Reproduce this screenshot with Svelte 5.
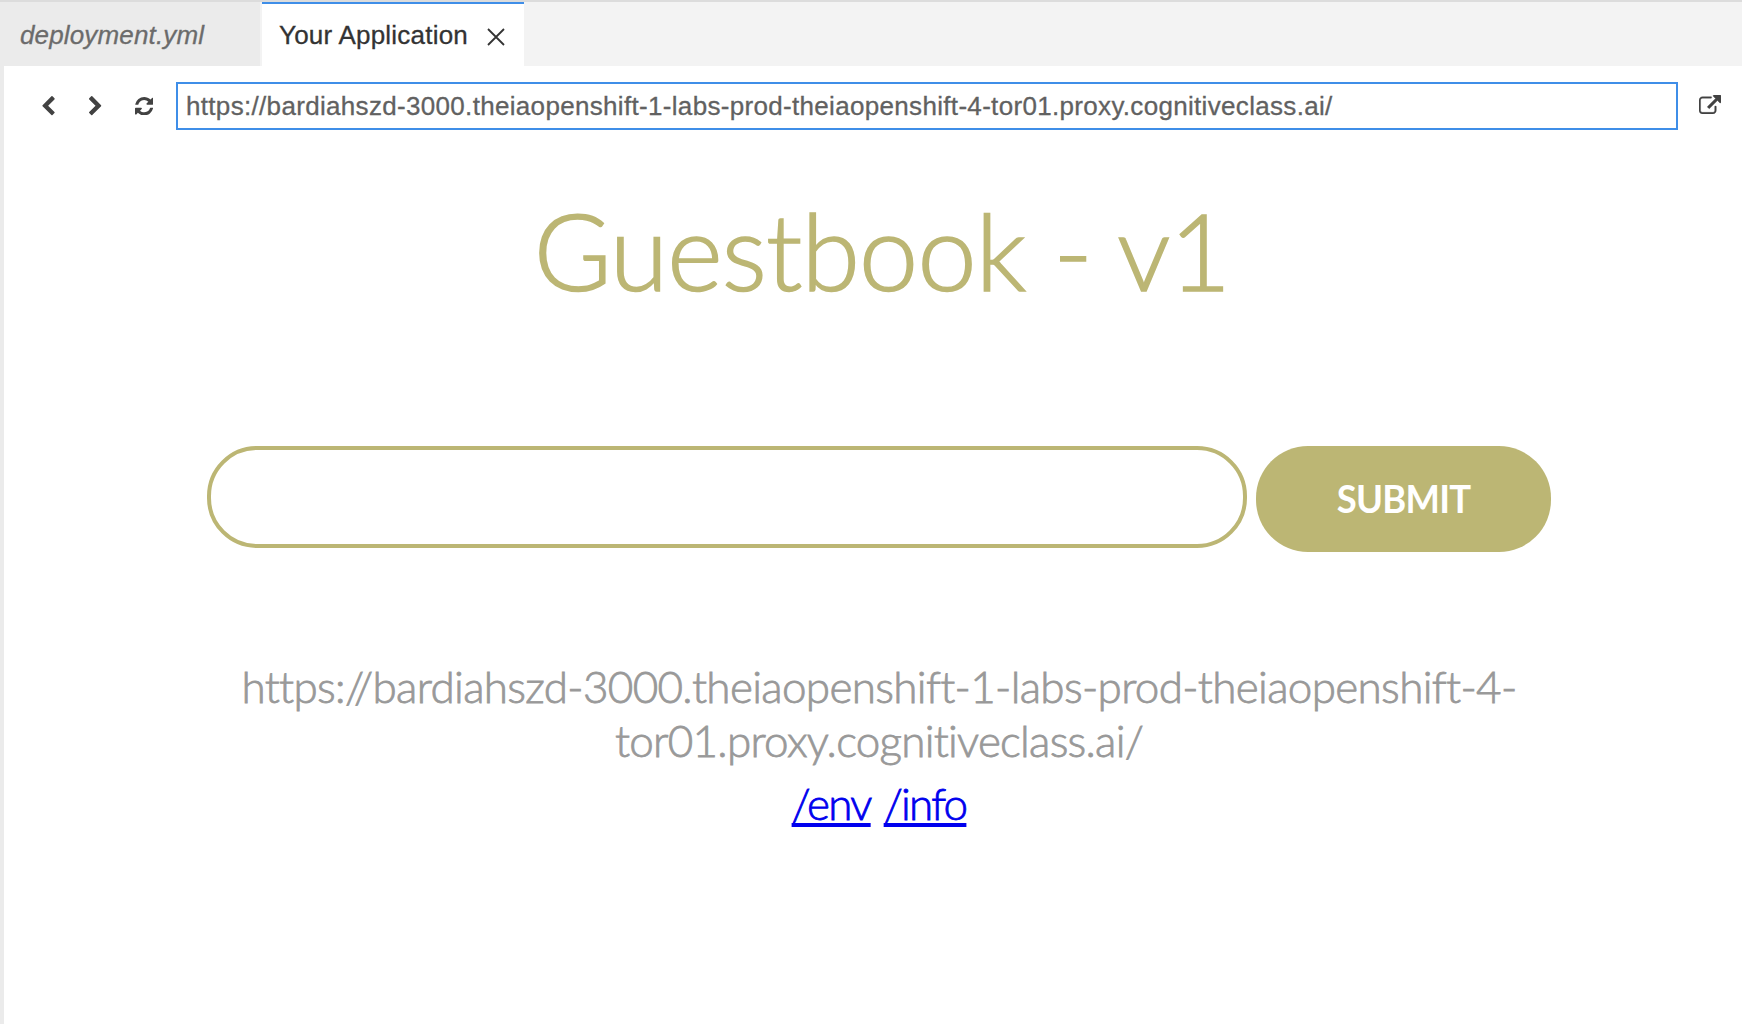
<script>
  const address = 'https://bardiahszd-3000.theiaopenshift-1-labs-prod-theiaopenshift-4-tor01.proxy.cognitiveclass.ai/';
  const split = address.indexOf('tor01');
  const hostLines = [address.slice(0, split), address.slice(split)];
  const chevron =
    'M1171 301l-531 531 531 531q19 19 19 45t-19 45l-166 166q-19 19-45 19t-45-19l-742-742q-19-19-19-45t19-45l742-742q19-19 45-19t45 19l166 166q19 19 19 45t-19 45z';
</script>

<div class="window">
  <div class="tabs">
    <div class="tab idle"><span class="file">deployment.yml</span></div>
    <div class="tab active">
      <span class="title">Your Application</span>
      <svg class="close" viewBox="0 0 18 18"><path d="M1 1L17 17M17 1L1 17" /></svg>
    </div>
  </div>

  <div class="panel">
    <div class="toolbar">
      <svg class="chevron" viewBox="124 20 1066 1624"><path d={chevron} /></svg>
      <svg class="chevron next" viewBox="124 20 1066 1624"><path d={chevron} /></svg>
      <svg class="refresh" viewBox="0 0 1536 1536"><path d="M1511 928q0 5-1 7-64 268-268 434.5t-478 166.5q-146 0-282.5-55t-243.5-157l-129 129q-19 19-45 19t-45-19-19-45v-448q0-26 19-45t45-19h448q26 0 45 19t19 45-19 45l-137 137q71 66 161 102t187 36q134 0 250-65t186-179q11-17 53-117 8-23 30-23h192q13 0 22.5 9.5t9.5 22.5zm25-800v448q0 26-19 45t-45 19h-448q-26 0-45-19t-19-45 19-45l138-138q-148-137-349-137-134 0-250 65t-186 179q-11 17-53 117-8 23-30 23h-199q-13 0-22.5-9.5t-9.5-22.5v-7q65-268 270-434.5t480-166.5q146 0 284 55.5t245 156.5l130-129q19-19 45-19t45 19 19 45z" /></svg>
      <div class="address"><span>{address}</span></div>
      <svg class="external" viewBox="0 0 1792 1536"><path d="M1408 928v320q0 119-84.5 203.5t-203.5 84.5h-832q-119 0-203.5-84.5t-84.5-203.5v-832q0-119 84.5-203.5t203.5-84.5h704q14 0 23 9t9 23v64q0 14-9 23t-23 9h-704q-66 0-113 47t-47 113v832q0 66 47 113t113 47h832q66 0 113-47t47-113v-320q0-14 9-23t23-9h64q14 0 23 9t9 23zm384-864v512q0 26-19 45t-45 19-45-19l-176-176-652 652q-10 10-23 10t-23-10l-114-114q-10-10-10-23t10-23l652-652-176-176q-19-19-19-45t19-45 45-19h512q26 0 45 19t19 45z" /></svg>
    </div>

    <main>
      <h1>Guestbook - v1</h1>
      <form onsubmit={(e) => e.preventDefault()}>
        <input type="text" aria-label="Entry" />
        <button type="submit"><span class="label">SUBMIT</span></button>
      </form>
      <div class="host">
        <div class="first">{hostLines[0]}</div>
        <div class="second">{hostLines[1]}</div>
      </div>
      <div class="links"><a class="env" href="#env">/env</a><a class="info" href="#info">/info</a></div>
    </main>
  </div>
</div>

<style>
  :global(body) {
    margin: 0;
    overflow: hidden;
    background: #fff;
  }
  .window {
    box-sizing: border-box;
    width: 1742px;
    height: 1024px;
    display: flex;
    flex-direction: column;
    border-top: 2px solid #dcdcdc;
    background: #ebebeb;
    font-family: 'Liberation Sans', Arial, sans-serif;
  }
  .tabs {
    display: flex;
    height: 64px;
    background: #f3f3f3;
  }
  .tab {
    box-sizing: border-box;
    display: flex;
    align-items: center;
    font-size: 26px;
    line-height: 30px;
    white-space: nowrap;
  }
  .idle {
    width: 260px;
    margin-right: 2px;
    padding: 2px 0 0 20px;
    background: #ebebeb;
    color: #6b6b6b;
    font-style: italic;
    letter-spacing: 0.15px;
    -webkit-text-stroke: 0.3px #6b6b6b;
  }
  .active {
    width: 262px;
    border-top: 2px solid #3f8ee8;
    padding: 0 19px 0 17px;
    justify-content: space-between;
    background: #fff;
    color: #333;
    letter-spacing: 0.22px;
    -webkit-text-stroke: 0.3px #333;
  }
  .file,
  .title {
    display: block;
  }
  .close {
    width: 18px;
    height: 18px;
    margin-top: 4px;
    fill: none;
    stroke: #333;
    stroke-width: 1.8;
  }
  .panel {
    flex: 1;
    margin-left: 4px;
    background: #fff;
  }
  .toolbar {
    display: flex;
    align-items: center;
    height: 48px;
    padding: 16px 21px 0 38px;
    fill: #424242;
  }
  .chevron {
    width: 12.7px;
    height: 19.4px;
  }
  .next {
    margin-left: 34.6px;
    transform: scaleX(-1);
  }
  .refresh {
    width: 18.4px;
    height: 18.4px;
    margin-left: 32.6px;
  }
  .address {
    box-sizing: border-box;
    width: 1502px;
    height: 48px;
    margin-left: auto;
    padding-left: 8px;
    border: 2px solid #3f8ee8;
    color: #616161;
    font-size: 26px;
    line-height: 44px;
    letter-spacing: 0.32px;
    white-space: nowrap;
    -webkit-text-stroke: 0.3px #616161;
  }
  .external {
    width: 22px;
    height: 19px;
    margin: 0 0 3px 21px;
    stroke: #424242;
    stroke-width: 30;
  }
  main {
    display: flex;
    flex-direction: column;
    align-items: center;
    padding-left: 12px;
    font-family: Lato, 'Open Sans', sans-serif;
    font-weight: 300;
  }
  h1 {
    margin: 60px 0 0;
    height: 120px;
    padding-left: 6px;
    color: #bcb674;
    font-size: 106px;
    font-weight: 300;
    line-height: 120px;
    letter-spacing: -0.8px;
    white-space: nowrap;
    -webkit-text-stroke: 1.6px #bcb674;
  }
  form {
    display: flex;
    align-items: flex-start;
    gap: 9px;
    height: 106px;
    margin-top: 136px;
  }
  input {
    box-sizing: border-box;
    width: 1040px;
    height: 102px;
    padding: 0 40px;
    border: 4px solid #bcb674;
    border-radius: 50px;
    outline: none;
    background: #fff;
    font: inherit;
    font-size: 40px;
  }
  button {
    width: 295px;
    height: 106px;
    padding: 0 0 2px;
    border: 0;
    border-radius: 52px;
    background: #bcb674;
    color: #fff;
    font-family: Lato, sans-serif;
    font-size: 39px;
    font-weight: 700;
  }
  .label {
    display: inline-block;
    letter-spacing: -0.8px;
    transform: scaleX(0.935);
  }
  .host {
    margin-top: 107px;
    color: #999;
    font-size: 44px;
    line-height: 54px;
    letter-spacing: -0.67px;
    text-align: center;
    white-space: nowrap;
    -webkit-text-stroke: 0.8px #999;
  }
  .second {
    letter-spacing: -0.74px;
  }
  .links {
    display: flex;
    gap: 13px;
    margin-top: 9px;
    font-size: 44px;
    line-height: 54px;
    letter-spacing: -1.75px;
    -webkit-text-stroke: 0.8px #0000ee;
  }
  a {
    color: #0000ee;
    text-decoration-thickness: 4px;
    text-underline-offset: 3px;
    text-decoration-skip-ink: none;
  }
</style>
